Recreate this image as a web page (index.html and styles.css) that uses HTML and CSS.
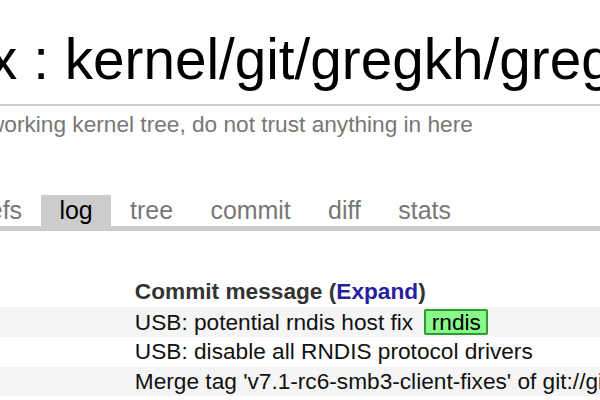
FILE: index.html
```html
<!DOCTYPE html>
<html lang="en">
<head>
<meta charset="utf-8">
<title>kernel/git/gregkh/gregkh.git - log</title>
<link rel="stylesheet" href="styles.css">
</head>
<body>
<div class="page">
  <header class="header">
    <div class="main"><a class="home" href="#">index</a> : <a class="repo" href="#">kernel/git/gregkh/gregkh.git</a></div>
    <div class="sub">working kernel tree, do not trust anything in here</div>
  </header>
  <nav class="tabs"><a href="#">summary</a><a href="#">refs</a><a class="active" href="#">log</a><a href="#">tree</a><a href="#">commit</a><a href="#">diff</a><a href="#">stats</a></nav>
  <table class="list">
    <tr class="head">
      <th class="age"><span class="age-col"></span></th>
      <th class="msg">Commit message (<a class="expand" href="#">Expand</a>)</th>
      <th>Author</th>
      <th>Files</th>
      <th>Lines</th>
    </tr>
    <tr>
      <td class="age"><span class="age-col"></span></td>
      <td class="msg"><a class="subject" href="#">USB: potential rndis host fix</a><a class="deco" href="#">rndis</a></td>
      <td>Greg Kroah-Hartman</td>
      <td>1</td>
      <td>-0/+9</td>
    </tr>
    <tr>
      <td class="age"><span class="age-col"></span></td>
      <td class="msg"><a class="subject" href="#">USB: disable all RNDIS protocol drivers</a></td>
      <td>Greg Kroah-Hartman</td>
      <td>4</td>
      <td>-0/+4</td>
    </tr>
    <tr>
      <td class="age"><span class="age-col"></span></td>
      <td class="msg"><a class="subject" href="#">Merge tag 'v7.1-rc6-smb3-client-fixes' of git://git.samba.org/sfrench/cifs-2.6</a></td>
      <td>Linus Torvalds</td>
      <td>6</td>
      <td>-19/+34</td>
    </tr>
  </table>
</div>
</body>
</html>
```
FILE: styles.css
```css
html, body {
  margin: 0;
  padding: 0;
  background: #fff;
}

body {
  font-family: "Liberation Sans", Arial, sans-serif;
  font-size: 22.67px;
  color: #333;
}

a {
  text-decoration: none;
  color: #000;
}

.page {
  width: 600px;
  height: 400px;
  overflow: hidden;
}

.header .main {
  font-size: 56.67px;
  line-height: 64px;
  padding-top: 28px;
  margin-bottom: 12px;
  color: #000;
  white-space: nowrap;
  text-indent: -118px;
}

.header .sub {
  border-top: 2px solid #ccc;
  padding-top: 5px;
  color: #777;
  white-space: nowrap;
  text-indent: -12px;
}

.tabs {
  margin-top: 57px;
  border-bottom: 5px solid #ccc;
  font-size: 24.93px;
  line-height: 31px;
  white-space: nowrap;
  text-indent: -178px;
}

.tabs a {
  display: inline-block;
  text-indent: 0;
  padding: 0 18.7px;
  color: #777;
}

.tabs a.active {
  background: #ccc;
  color: #000;
}

.list {
  margin-top: 46px;
  border-collapse: collapse;
  white-space: nowrap;
}

.list th,
.list td {
  padding: 2.25px 11.33px;
  line-height: 25px;
  text-align: left;
  vertical-align: baseline;
}

.list th {
  font-weight: bold;
  color: #333;
}

.list .age {
  padding: 0;
}

.age-col {
  display: inline-block;
  width: 123.5px;
}

.list tr:nth-child(even) {
  background: #f5f5f5;
}

.list tr:nth-child(odd) {
  background: #fff;
}

.expand {
  color: #281ea0;
}

.subject {
  color: #111;
}

.deco {
  display: inline-block;
  margin: 0 11.3px;
  padding: 0 5.3px;
  line-height: 22px;
  background: #88f888;
  border: 2px solid #2f9a2f;
  border-radius: 2px;
  color: #000;
}
```
